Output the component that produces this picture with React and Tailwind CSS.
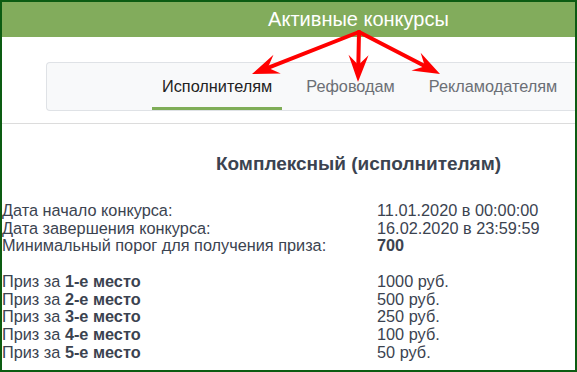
import React from 'react';

const ORIGIN = [357, 30];
const TIPS = [[250, 72], [356, 80], [438, 72]];

const ROWS = [
  { label: 'Дата начало конкурса:', value: '11.01.2020 в 00:00:00' },
  { label: 'Дата завершения конкурса:', value: '16.02.2020 в 23:59:59' },
  { label: 'Минимальный порог для получения приза:', value: '700', bold: true },
];

const PRIZES = [
  ['1-е место', '1000 руб.'],
  ['2-е место', '500 руб.'],
  ['3-е место', '250 руб.'],
  ['4-е место', '100 руб.'],
  ['5-е место', '50 руб.'],
];

function arrowHead([x0, y0], [x1, y1]) {
  const dx = x1 - x0;
  const dy = y1 - y0;
  const len = Math.hypot(dx, dy);
  const ux = dx / len;
  const uy = dy / len;
  const nx = -uy;
  const ny = ux;
  const L = 24;
  const W = 10;
  const bx = x1 - L * ux;
  const by = y1 - L * uy;
  const kx = x1 - 17 * ux;
  const ky = y1 - 17 * uy;
  const pts = [
    [x1, y1],
    [bx + W * nx - 3 * ux, by + W * ny - 3 * uy],
    [kx, ky],
    [bx - W * nx - 3 * ux, by - W * ny - 3 * uy],
  ];
  return { pts: pts.map(p => p.join(',')).join(' '), end: [kx + 2 * ux, ky + 2 * uy] };
}

function Arrows() {
  return (
    <svg className="absolute inset-0 pointer-events-none" width="577" height="372">
      {TIPS.map((tip, i) => {
        const head = arrowHead(ORIGIN, tip);
        return (
          <g key={i}>
            <line x1={ORIGIN[0]} y1={ORIGIN[1]} x2={head.end[0]} y2={head.end[1]} stroke="#ff0000" strokeWidth="4" strokeLinecap="round" />
            <polygon points={head.pts} fill="#ff0000" />
          </g>
        );
      })}
    </svg>
  );
}

export default function App() {
  return (
    <div className="relative w-[577px] h-[372px] overflow-hidden border-2 border-[#0c5c12] bg-white font-['Liberation_Sans',Arial,sans-serif]">
      {/* Header */}
      <div className="h-[35px] bg-[#82ac5c] flex items-center justify-center pl-[140px]">
        <span className="text-white text-[20px] leading-none -mt-[1px]">Активные конкурсы</span>
      </div>

      {/* Tabs */}
      <div className="mt-[25px] ml-[44px] h-[49px] bg-[#f8f9fa] border border-r-0 border-[#dfe2e6] rounded-l-[4px] flex items-stretch pl-[105px] gap-[14px]">
        <div className="px-[10px] flex items-center text-[16.3px] text-[#222] border-b-[3px] border-[#7fad57] pt-[3px]">Исполнителям</div>
        <div className="px-[10px] flex items-center text-[16.3px] text-[#6b6f75] border-b-[3px] border-transparent pt-[3px]">Рефоводам</div>
        <div className="px-[10px] flex items-center text-[16.3px] text-[#6b6f75] border-b-[3px] border-transparent pt-[3px]">Рекламодателям</div>
      </div>

      <div className="mt-[12px] border-t border-[#dcdcdc]" />

      {/* Content */}
      <div className="pt-[29px] pl-[140px] text-center text-[19px] font-bold text-[#3b4350] leading-[22px]">
        Комплексный (исполнителям)
      </div>

      <div className="mt-[27px] text-[16.3px] leading-[17.7px] text-[#3b4350]">
        {ROWS.map(r => (
          <div key={r.label} className="flex">
            <div className="w-[375px]">{r.label}</div>
            <div className={r.bold ? 'font-bold' : ''}>{r.value}</div>
          </div>
        ))}
        <div className="h-[17.7px]" />
        {PRIZES.map(([place, sum]) => (
          <div key={place} className="flex">
            <div className="w-[375px]">Приз за <b>{place}</b></div>
            <div>{sum}</div>
          </div>
        ))}
      </div>

      <Arrows />
    </div>
  );
}
